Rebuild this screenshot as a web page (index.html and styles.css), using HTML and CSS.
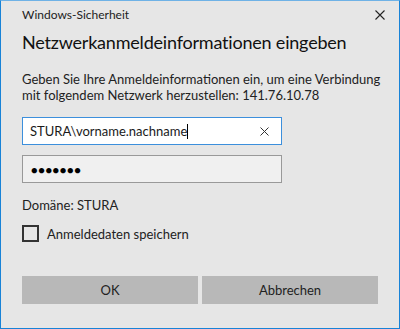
FILE: index.html
```html
<!DOCTYPE html>
<html lang="de">
<head>
  <meta charset="UTF-8" />
  <title>Windows-Sicherheit</title>
  <link rel="stylesheet" href="styles.css">
</head>
<body>

  <div class="dialog">
    <div class="titlebar">
      <span class="title">Windows-Sicherheit</span>
      <svg class="close" width="10" height="10" viewBox="0 0 10 10">
        <path d="M0.5 0.5 L9.5 9.5 M9.5 0.5 L0.5 9.5" stroke="#222" stroke-width="1.1" fill="none"/>
      </svg>
    </div>

    <h1>Netzwerkanmeldeinformationen eingeben</h1>

    <p class="info">Geben Sie Ihre Anmeldeinformationen ein, um eine Verbindung<br>mit folgendem Netzwerk herzustellen: 141.76.10.78</p>

    <div class="field active">
      <span class="value">STURA\vorname.nachname<span class="caret"></span></span>
      <svg class="clear" width="9" height="9" viewBox="0 0 9 9">
        <path d="M0.5 0.5 L8.5 8.5 M8.5 0.5 L0.5 8.5" stroke="#333" stroke-width="1" fill="none"/>
      </svg>
    </div>

    <div class="field password">
      <span class="dots">●●●●●●●</span>
    </div>

    <div class="domain">Domäne: STURA</div>

    <label class="remember">
      <span class="box"></span>
      <span>Anmeldedaten speichern</span>
    </label>

    <div class="buttons">
      <button>OK</button>
      <button>Abbrechen</button>
    </div>
  </div>

</body>
</html>
```

FILE: styles.css
```css
body {
  margin: 0;
  font-family: 'Lato', sans-serif;
  color: #1a1a1a;
}

.dialog {
  width: 400px;
  height: 329px;
  box-sizing: border-box;
  overflow: hidden;
  background-color: #e6e6e6;
  border: 1px solid #1883d7;
  border-top-color: #6fb2e6;
  padding: 0 21px 0 21px;
}

.titlebar {
  display: flex;
  justify-content: space-between;
  align-items: center;
  height: 27px;
}

.title {
  font-size: 12px;
  color: #222;
}

.close {
  margin-right: -7px;
}

h1 {
  font-size: 18px;
  line-height: 26px;
  font-weight: normal;
  letter-spacing: -0.2px;
  white-space: nowrap;
  margin: 1px 0 0 0;
  color: #111;
}

.info {
  font-size: 13px;
  line-height: 16px;
  white-space: nowrap;
  margin: 16px 0 0 0;
  color: #222;
}

.field {
  width: 260px;
  height: 28px;
  box-sizing: border-box;
  display: flex;
  align-items: center;
  justify-content: space-between;
  padding: 0 12px 0 7px;
  font-size: 13px;
}

.active {
  margin-top: 14px;
  background-color: #fff;
  border: 1px solid #3c8fdc;
}

.caret {
  display: inline-block;
  width: 1px;
  height: 15px;
  background-color: #000;
  vertical-align: -3px;
}

.password {
  margin-top: 10px;
  background-color: #f0f0f0;
  border: 1px solid #999;
}

.dots {
  font-size: 11px;
  letter-spacing: 0.6px;
  margin-left: 1px;
  color: #000;
}

.domain {
  font-size: 13px;
  line-height: 16px;
  margin-top: 14px;
  color: #222;
}

.remember {
  display: flex;
  align-items: center;
  gap: 8px;
  margin-top: 12px;
  font-size: 13px;
  color: #222;
}

.box {
  width: 17px;
  height: 17px;
  box-sizing: border-box;
  border: 2px solid #333;
}

.buttons {
  display: flex;
  gap: 4px;
  margin-top: 34px;
}

.buttons button {
  flex: 1;
  height: 28px;
  border: none;
  background-color: #b8b8b8;
  font-family: 'Lato', sans-serif;
  font-size: 13px;
  color: #222;
}
```
